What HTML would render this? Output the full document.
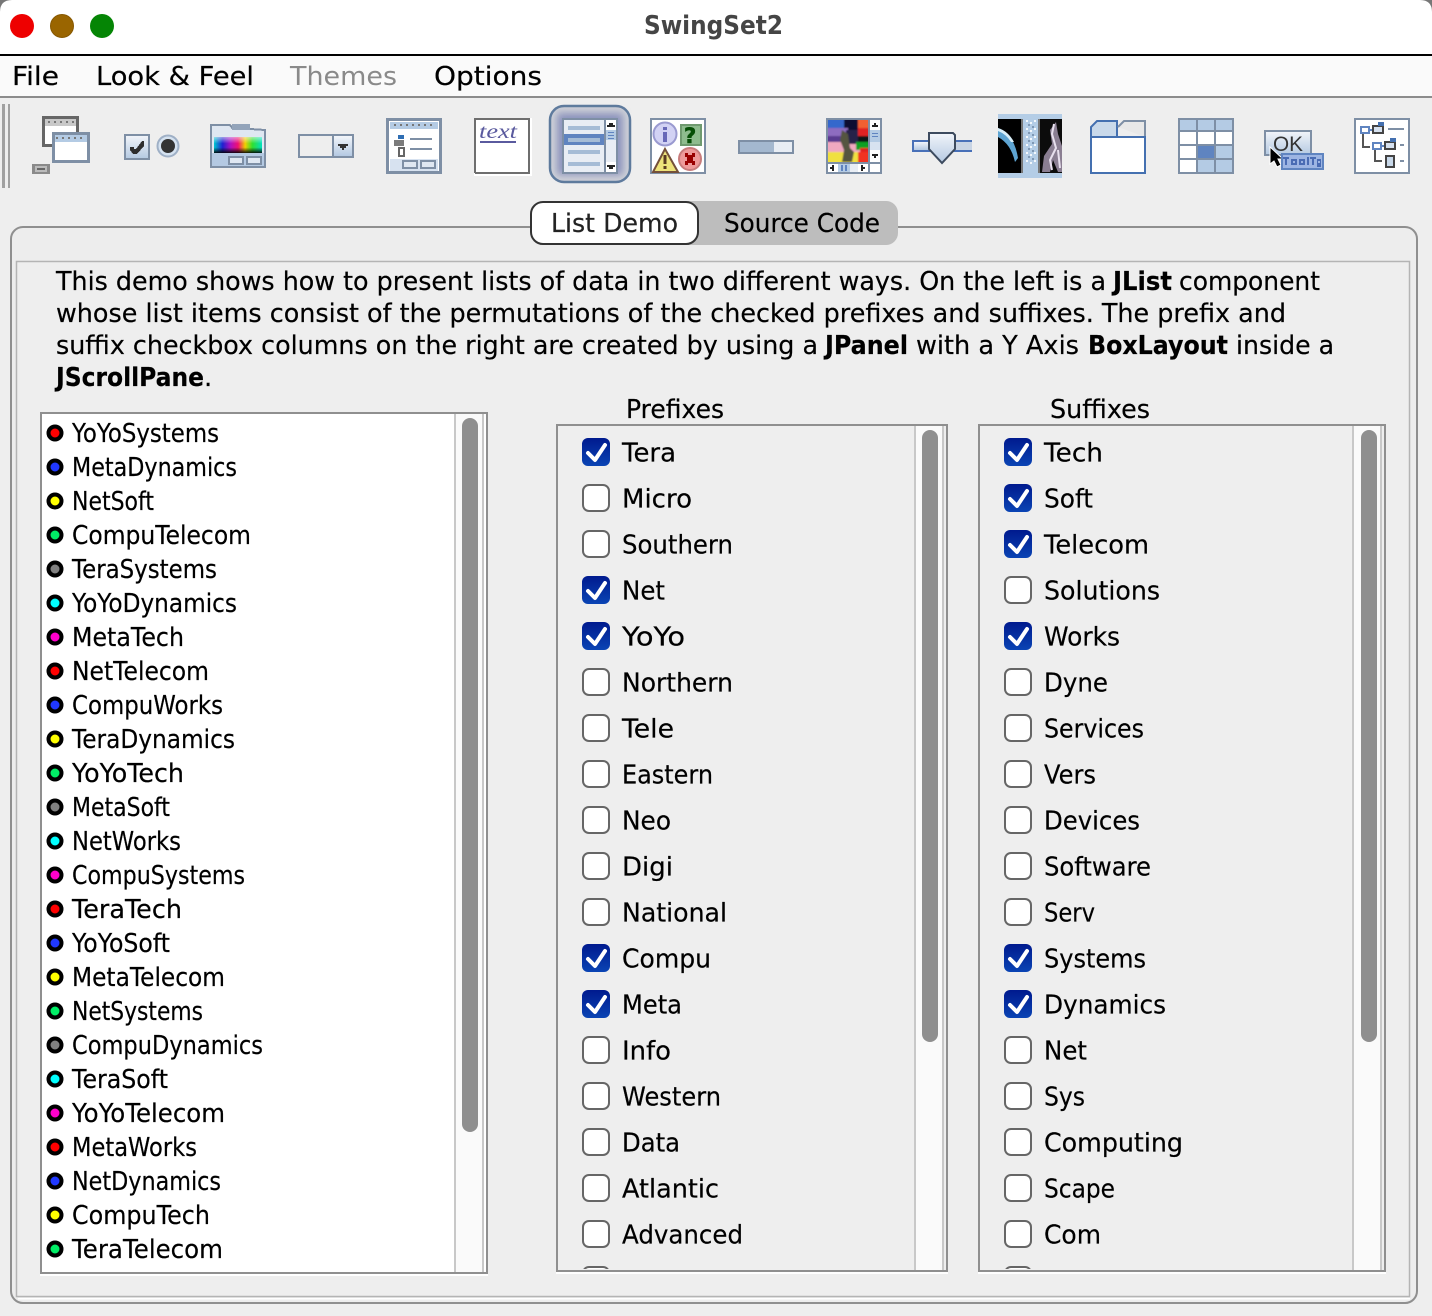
<!DOCTYPE html>
<html lang="en"><head><meta charset="utf-8"><title>SwingSet2</title>
<style>
html,body{margin:0;padding:0;background:#eee;width:1432px;height:1316px;overflow:hidden}
svg{display:block}
text{font-family:"DejaVu Sans","Liberation Sans",sans-serif;font-size:26px;fill:#000;white-space:pre;stroke:#000;stroke-width:.2px}
.b{font-weight:bold}
.p{shape-rendering:crispEdges}
.u{fill:#fff;stroke:#666;stroke-width:2}
.c{fill:url(#cb)}
.k{fill:none;stroke:#fff;stroke-width:4;stroke-linecap:round;stroke-linejoin:round}
.d{stroke:#000;stroke-width:4}
</style></head><body>
<svg xmlns="http://www.w3.org/2000/svg" width="1432" height="1316" viewBox="0 0 1432 1316">
<defs>
<linearGradient id="cb" x1="0" y1="0" x2="0" y2="1"><stop offset="0" stop-color="#001a8e"/><stop offset="1" stop-color="#0a44b4"/></linearGradient>
<linearGradient id="bl" x1="0" y1="0" x2="0" y2="1"><stop offset="0" stop-color="#f2f5fa"/><stop offset="1" stop-color="#b4c9e2"/></linearGradient>
<linearGradient id="rb" x1="0" y1="0" x2="1" y2="0"><stop offset="0" stop-color="#00c8d0"/><stop offset=".18" stop-color="#2020d0"/><stop offset=".35" stop-color="#b010c0"/><stop offset=".5" stop-color="#f01070"/><stop offset=".65" stop-color="#f0d000"/><stop offset=".8" stop-color="#30e030"/><stop offset="1" stop-color="#00e0c0"/></linearGradient>
<linearGradient id="dk" x1="0" y1="0" x2="0" y2="1"><stop offset="0" stop-color="#fff" stop-opacity=".55"/><stop offset=".4" stop-color="#fff" stop-opacity="0"/><stop offset=".65" stop-color="#000" stop-opacity="0"/><stop offset="1" stop-color="#000" stop-opacity=".9"/></linearGradient>
<filter id="bs" x="-20%" y="-20%" width="140%" height="140%"><feGaussianBlur stdDeviation="4"/></filter>
<filter id="b1" x="-5%" y="-5%" width="110%" height="110%"><feGaussianBlur stdDeviation=".9"/></filter>
<clipPath id="sc"><rect x="828" y="120" width="40" height="42"/></clipPath>
<clipPath id="cp"><rect x="558" y="426" width="358" height="843"/></clipPath>
<clipPath id="cs"><rect x="980" y="426" width="372" height="843"/></clipPath>
</defs>

<rect width="1432" height="1316" fill="#eee"/>
<!-- title bar -->
<rect width="1432" height="54" fill="#fff"/>
<path d="M0 0H12Q0 0 0 12Z M1432 0H1420Q1432 0 1432 12Z" fill="#777"/>
<rect y="54" width="1432" height="2" fill="#000" class="p"/>
<circle cx="22" cy="26" r="12" fill="#ee0000"/>
<circle cx="62" cy="26" r="11.500" fill="#9a6500" stroke="#875800"/>
<circle cx="102" cy="26" r="12" fill="#058505"/>
<text x="644" y="34" class="b" style="fill:#454545;stroke:none" textLength="139" lengthAdjust="spacingAndGlyphs">SwingSet2</text>
<!-- menu -->
<rect y="56" width="1432" height="40" fill="#fafafa"/>
<rect y="96" width="1432" height="2" fill="#8c8c8c" class="p"/>
<text x="12" y="85" textLength="47" lengthAdjust="spacingAndGlyphs">File</text>
<text x="96" y="85" textLength="158" lengthAdjust="spacingAndGlyphs">Look &amp; Feel</text>
<text x="290" y="85" style="fill:#8a8a8a;stroke:none" textLength="107" lengthAdjust="spacingAndGlyphs">Themes</text>
<text x="434" y="85" textLength="108" lengthAdjust="spacingAndGlyphs">Options</text>

<!-- toolbar grip -->
<g class="p" fill="#a0a0a0"><rect x="2" y="104" width="3" height="84"/><rect x="8" y="104" width="2" height="84"/></g>

<!-- icon 1 internal frame -->
<g class="p">
<rect x="43.500" y="117.500" width="34" height="28" fill="#fff" stroke="#666" stroke-width="3"/>
<rect x="45" y="119" width="31" height="7" fill="#c8c8c8"/>
<rect x="53.500" y="133.500" width="35" height="28" fill="#fff" stroke="#7e8fa5" stroke-width="3"/>
<rect x="55" y="135" width="32" height="7" fill="#b4cbe4"/>
<path d="M56 137h2v2h-2zM62 137h2v2h-2zM68 137h2v2h-2zM74 137h2v2h-2zM80 137h2v2h-2z M48 121h2v2h-2zM54 121h2v2h-2zM60 121h2v2h-2zM66 121h2v2h-2zM72 121h2v2h-2z" fill="#777"/>
<rect x="32" y="164" width="18" height="10" fill="#8a8a8a"/><rect x="35" y="166" width="12" height="6" fill="#bbb"/><rect x="37" y="168" width="8" height="2" fill="#666"/>
</g>
<!-- icon 2 check/radio -->
<rect x="125" y="135" width="24" height="24" fill="url(#bl)" stroke="#7e8fa5" stroke-width="2" class="p"/>
<path d="M130 147h4v2h2l6-8h2v5l-7 8h-4l-3-4z" fill="#2e2e2e" class="p"/>
<circle cx="168" cy="146" r="10.500" fill="#d5e2f0" stroke="#9fb0c6" stroke-width="2"/>
<circle cx="168" cy="146" r="7" fill="#333"/>
<!-- icon 3 color chooser -->
<g class="p">
<path d="M211 167V125H230L233 129H250L265 130V167Z" fill="#dfe7f1" stroke="#7e8fa5" stroke-width="2"/>
<rect x="212" y="153" width="52" height="13" fill="#b4c9e2"/>
<rect x="232" y="124" width="18" height="6" fill="#93a4ba"/>
<rect x="214" y="137" width="48" height="16" fill="url(#rb)"/><rect x="214" y="137" width="48" height="16" fill="url(#dk)"/>
<rect x="229" y="157" width="14" height="7" fill="#dfe7f1" stroke="#7e8fa5" stroke-width="2"/>
<rect x="247" y="157" width="14" height="7" fill="#dfe7f1" stroke="#7e8fa5" stroke-width="2"/>
</g>
<!-- icon 4 combo -->
<g class="p">
<rect x="299" y="135" width="54" height="22" fill="#eee" stroke="#7e8fa5" stroke-width="2"/>
<rect x="333" y="136" width="19" height="20" fill="url(#bl)"/><rect x="332" y="135" width="2" height="22" fill="#7e8fa5"/>
<path d="M338 144h10v2h-2v2h-2v2h-2v-2h-2v-2h-2z" fill="#333"/>
</g>
<!-- icon 5 form window -->
<g class="p">
<rect x="387.500" y="119.500" width="53" height="53" fill="#fff" stroke="#7e8fa5" stroke-width="3"/>
<rect x="390" y="122" width="48" height="7" fill="#b4cbe4"/>
<path d="M394 124h2v2h-2zM400 124h2v2h-2zM406 124h2v2h-2zM412 124h2v2h-2zM418 124h2v2h-2zM424 124h2v2h-2zM430 124h2v2h-2z" fill="#777"/>
<rect x="394" y="140" width="10" height="6" fill="#7b7b7b"/><rect x="398" y="135" width="6" height="4" fill="#2f6eb3"/>
<rect x="410" y="138" width="22" height="2" fill="#7e8fa5"/><rect x="410" y="148" width="22" height="2" fill="#7e8fa5"/>
<rect x="399" y="148" width="5" height="8" fill="#fff" stroke="#666" stroke-width="2"/>
<rect x="390" y="159" width="48" height="12" fill="#d7e2f0"/>
<rect x="403" y="161" width="14" height="7" fill="#dfe7f1" stroke="#7e8fa5" stroke-width="2"/>
<rect x="421" y="161" width="14" height="7" fill="#dfe7f1" stroke="#7e8fa5" stroke-width="2"/>
</g>
<!-- icon 6 text -->
<g class="p">
<rect x="474" y="118" width="58" height="58" fill="#fff"/>
<path d="M475 173V119H529V173H475" fill="#fff" stroke="#6e6e6e" stroke-width="2"/>
<rect x="480" y="141" width="36" height="2" fill="#5a5a9e"/>
</g>
<text x="479" y="138" style="font-size:20px;font-style:italic;fill:#5a5a9e;stroke:none;font-family:'Liberation Serif',serif" textLength="38" lengthAdjust="spacingAndGlyphs">text</text>
<!-- icon 7 selected list -->
<rect x="550" y="106" width="80" height="76" rx="14" fill="#d0d2d8" stroke="#5d7a9c" stroke-width="2.500"/>
<rect x="557" y="113" width="66" height="62" fill="#8a92bc" filter="url(#bs)"/>
<g class="p">
<rect x="563" y="119" width="54" height="54" fill="#e8edf4" stroke="#7e8fa5" stroke-width="2"/>
<rect x="568" y="126" width="32" height="4" fill="#a5bcd6"/>
<rect x="564" y="134" width="42" height="11" fill="#5f84c0"/><rect x="568" y="138" width="32" height="4" fill="#a5bcd6"/>
<rect x="568" y="150" width="32" height="4" fill="#a5bcd6"/><rect x="568" y="162" width="32" height="4" fill="#a5bcd6"/>
<rect x="605" y="120" width="11" height="52" fill="#e8edf4"/><rect x="604" y="120" width="2" height="52" fill="#7e8fa5"/>
<rect x="606" y="120" width="10" height="10" fill="#fff"/><path d="M609 123h4v2h-4z M607 125h8v2h-8z" fill="#222"/>
<rect x="606" y="130" width="10" height="10" fill="#b4cbe4"/><rect x="608" y="132" width="6" height="1" fill="#5f84c0"/><rect x="608" y="135" width="6" height="1" fill="#5f84c0"/><rect x="608" y="138" width="6" height="1" fill="#5f84c0"/>
<rect x="606" y="162" width="10" height="10" fill="#fff"/><path d="M607 165h8v2h-8z M609 167h4v2h-4z" fill="#222"/>
</g>
<!-- icon 8 option pane -->
<g class="p"><rect x="651" y="119" width="54" height="54" fill="#fff" stroke="#7e8fa5" stroke-width="2"/>
<rect x="681" y="125" width="20" height="20" fill="#8ebc8e" stroke="#6f9a6f" stroke-width="2"/></g>
<circle cx="665" cy="134" r="11.500" fill="#d2d2f4" stroke="#9a9ad0" stroke-width="2"/>
<rect x="663" y="127" width="4" height="3" fill="#6868b8" class="p"/><rect x="663" y="132" width="4" height="10" fill="#6868b8" class="p"/>
<text x="684" y="143" style="font-size:21px;font-weight:bold;fill:#064e06;stroke:#064e06;stroke-width:.6px">?</text>
<path d="M665 149l13 23h-25z" fill="#ede27a" stroke="#74503a" stroke-width="2"/>
<rect x="663.500" y="155" width="3" height="9" fill="#5a3a20" class="p"/><rect x="663.500" y="166" width="3" height="3" fill="#5a3a20" class="p"/>
<circle cx="690" cy="159" r="11" fill="#ee9a9a" stroke="#c87c7c" stroke-width="2"/>
<path d="M685 153h3v2h4v-2h3v4h-2v4h2v4h-3v-2h-4v2h-3v-4h2v-4h-2z" fill="#990000" class="p"/>
<!-- icon 9 progress -->
<g class="p"><rect x="739" y="141" width="54" height="12" fill="#e8edf4" stroke="#7e8fa5" stroke-width="2"/><rect x="740" y="142" width="34" height="10" fill="#a4b8cf"/></g>
<!-- icon 10 scroll pane -->
<g class="p">
<rect x="827" y="119" width="54" height="54" fill="#fff" stroke="#7e8fa5" stroke-width="2"/>
</g>
<g clip-path="url(#sc)"><g filter="url(#b1)">
<rect x="824" y="116" width="48" height="48" fill="#f0a8c0"/>
<rect x="824" y="116" width="30" height="14" fill="#3468cc"/><rect x="844" y="116" width="16" height="18" fill="#101030"/><rect x="858" y="116" width="14" height="12" fill="#f06030"/>
<rect x="824" y="128" width="24" height="14" fill="#8e6cc0"/><rect x="826" y="136" width="18" height="6" fill="#5a3a90"/><rect x="846" y="130" width="14" height="14" fill="#262048"/><rect x="858" y="128" width="14" height="8" fill="#e02020"/><rect x="858" y="136" width="14" height="8" fill="#101818"/>
<rect x="856" y="142" width="14" height="8" fill="#10a020"/><rect x="860" y="148" width="10" height="6" fill="#e02020"/>
<rect x="824" y="152" width="48" height="12" fill="#f0e040"/><rect x="858" y="152" width="12" height="12" fill="#f03020"/>
<path d="M842 130l6 4 2 14 4 4-2 10h-10l2-12-4-10z" fill="#555540"/>
</g></g>
<g class="p">
<rect x="868" y="120" width="2" height="52" fill="#7e8fa5"/><rect x="828" y="162" width="52" height="2" fill="#7e8fa5"/>
<rect x="870" y="120" width="10" height="10" fill="#fff"/><path d="M874 123h2v2h-2z M872 125h6v2h-6z" fill="#222"/>
<rect x="870" y="130" width="10" height="12" fill="#b4cbe4"/><rect x="872" y="133" width="6" height="1" fill="#5f84c0"/><rect x="872" y="136" width="6" height="1" fill="#5f84c0"/>
<rect x="870" y="142" width="10" height="8" fill="#d7e2f0"/>
<rect x="870" y="152" width="10" height="8" fill="#fff"/><path d="M872 154h6v2h-6z M874 156h2v2h-2z" fill="#222"/>
<rect x="828" y="164" width="8" height="8" fill="#fff"/><path d="M830 167h2v2h-2z M832 165h2v6h-2z" fill="#222"/>
<rect x="838" y="164" width="12" height="8" fill="#b4cbe4"/><rect x="841" y="165" width="2" height="6" fill="#5f84c0"/><rect x="845" y="165" width="2" height="6" fill="#5f84c0"/>
<rect x="850" y="164" width="8" height="8" fill="#e8edf4"/><rect x="859" y="164" width="8" height="8" fill="#fff"/><path d="M861 165h2v6h-2z M863 167h2v2h-2z" fill="#222"/>
</g>
<!-- icon 11 slider -->
<g class="p">
<rect x="912" y="140" width="60" height="2" fill="#4870b8"/><rect x="912" y="150" width="60" height="2" fill="#4870b8"/>
<rect x="914" y="142" width="58" height="8" fill="#c8d4e4"/><rect x="914" y="142" width="16" height="8" fill="url(#bl)"/><rect x="912" y="140" width="2" height="12" fill="#4870b8"/>
</g>
<path d="M929 133h24l2 2v14l-13 14-13-14v-14z" fill="url(#bl)" stroke="#3c4a5e" stroke-width="2"/>
<!-- icon 12 split pane -->
<g class="p">
<rect x="998" y="114" width="64" height="64" fill="#b4cde6"/>
<rect x="998" y="119" width="23" height="54" fill="#000"/><rect x="1021" y="119" width="2" height="54" fill="#777"/>
<rect x="1038" y="119" width="24" height="54" fill="#0c0c0c"/><rect x="1038" y="119" width="2" height="54" fill="#777"/>
<path d="M1026 120h2v2h-2zM1030 122h2v2h-2zM1034 120h2v2h-2zM1026 128h2v2h-2zM1030 130h2v2h-2zM1034 128h2v2h-2zM1026 136h2v2h-2zM1030 138h2v2h-2zM1034 136h2v2h-2zM1026 144h2v2h-2zM1030 146h2v2h-2zM1034 144h2v2h-2zM1026 152h2v2h-2zM1030 154h2v2h-2zM1034 152h2v2h-2zM1026 160h2v2h-2zM1030 162h2v2h-2zM1034 160h2v2h-2z" fill="#f4f8fc"/>
<path d="M1028 124h2v2h-2zM1032 126h2v2h-2zM1028 132h2v2h-2zM1032 134h2v2h-2zM1028 140h2v2h-2zM1032 142h2v2h-2zM1028 148h2v2h-2zM1032 150h2v2h-2zM1028 156h2v2h-2zM1032 158h2v2h-2z" fill="#7f98b4"/>
</g>
<path d="M998 128Q1014 134 1018 158L1015 162Q1011 144 998 137Z" fill="#5ea4d2"/>
<path d="M998 128Q1008 131 1014 142L1011 142Q1006 134 998 131Z" fill="#d8eef8"/>
<path d="M1056 122L1050 130 1052 144 1044 156 1042 172H1050L1053 160 1058 172H1062V146L1058 134Z" fill="#8a7e92"/>
<path d="M1054 124L1052 134 1056 148 1050 160 1052 170M1058 150L1060 168" fill="none" stroke="#e8e0ee" stroke-width="2"/>
<!-- icon 13 tabbed -->
<path d="M1091 137V127L1097 121H1117V137Z" fill="#c9d9ea" stroke="#4470b0" stroke-width="2"/>
<path d="M1118 127L1124 121H1145V137" fill="#e8e8e8" stroke="#7e8fa5" stroke-width="2"/>
<rect x="1091" y="137" width="54" height="36" fill="#fff" stroke="#4470b0" stroke-width="2" class="p"/>
<!-- icon 14 table -->
<g class="p">
<rect x="1179" y="119" width="54" height="54" fill="#fff" stroke="#7e8fa5" stroke-width="2"/>
<rect x="1180" y="120" width="52" height="10" fill="#b4cbe4"/>
<rect x="1198" y="146" width="17" height="13" fill="#5f84c0"/><rect x="1215" y="146" width="17" height="13" fill="#b4cbe4"/>
<rect x="1198" y="159" width="34" height="13" fill="#b4cbe4"/>
<rect x="1196" y="120" width="2" height="52" fill="#7e8fa5"/><rect x="1214" y="120" width="2" height="52" fill="#7e8fa5"/>
<rect x="1180" y="130" width="52" height="2" fill="#7e8fa5"/><rect x="1180" y="144" width="52" height="2" fill="#7e8fa5"/><rect x="1180" y="158" width="52" height="2" fill="#7e8fa5"/>
</g>
<!-- icon 15 tooltip -->
<rect x="1265" y="131" width="46" height="24" fill="url(#bl)" stroke="#7e8fa5" stroke-width="2" class="p"/>
<text x="1273" y="151" style="font-size:21px;fill:#333;stroke:none;font-family:'Liberation Sans',sans-serif" textLength="30" lengthAdjust="spacingAndGlyphs">OK</text>
<path d="M1270 147v17l4-3 3 6 4-2-3-6h5z" fill="#000" stroke="#fff" stroke-width="1"/>
<g class="p"><rect x="1281" y="153" width="43" height="17" fill="#9db5e3"/>
<rect x="1281" y="153" width="43" height="2" fill="#5f84c0"/><rect x="1281" y="168" width="43" height="2" fill="#5f84c0"/><rect x="1281" y="153" width="2" height="17" fill="#5f84c0"/><rect x="1322" y="153" width="2" height="17" fill="#5f84c0"/>
<path d="M1285 157h2v8h-2zM1283 157h6v2h-6zM1291 159h6v6h-6zM1299 159h6v6h-6zM1307 157h2v8h-2zM1312 157h2v8h-2zM1310 157h6v2h-6zM1317 159h4v8h-4z" fill="#4a6cb4"/>
<rect x="1293" y="161" width="2" height="2" fill="#9db5e3"/><rect x="1301" y="161" width="2" height="2" fill="#9db5e3"/><rect x="1318" y="161" width="2" height="2" fill="#9db5e3"/></g>
<!-- icon 16 tree -->
<g class="p">
<rect x="1355" y="119" width="54" height="54" fill="#fff" stroke="#7e8fa5" stroke-width="2"/>
<rect x="1361" y="127" width="8" height="6" fill="#fff" stroke="#5f84c0" stroke-width="2"/><rect x="1368" y="129" width="4" height="2" fill="#5f84c0"/>
<rect x="1373" y="126" width="10" height="7" fill="#d7e2f0" stroke="#444" stroke-width="2"/><rect x="1378" y="122" width="6" height="4" fill="#4470b0"/>
<rect x="1388" y="128" width="16" height="2" fill="#7e8fa5"/>
<rect x="1362" y="134" width="2" height="14" fill="#555"/><rect x="1362" y="146" width="8" height="2" fill="#555"/>
<rect x="1373" y="143" width="8" height="6" fill="#fff" stroke="#5f84c0" stroke-width="2"/><rect x="1380" y="145" width="4" height="2" fill="#5f84c0"/>
<rect x="1385" y="142" width="10" height="7" fill="#d7e2f0" stroke="#444" stroke-width="2"/><rect x="1390" y="138" width="6" height="4" fill="#4470b0"/>
<rect x="1400" y="144" width="4" height="2" fill="#7e8fa5"/>
<rect x="1374" y="150" width="2" height="12" fill="#555"/><rect x="1374" y="160" width="8" height="2" fill="#555"/>
<rect x="1386" y="156" width="8" height="11" fill="#c9d9ea" stroke="#444" stroke-width="2"/>
<rect x="1400" y="160" width="4" height="2" fill="#7e8fa5"/>
</g>

<!-- tabbed panel -->
<rect x="11" y="227" width="1406" height="1076" rx="12" fill="#ededed" stroke="#8f8f8f" stroke-width="2"/>
<rect x="16.500" y="261.500" width="1393" height="1035" fill="#eee" stroke="#b4b4b4" stroke-width="1.500"/>
<rect x="18" y="1298" width="1392" height="1.500" fill="#fff"/>
<!-- tabs -->
<rect x="660" y="201" width="238" height="44" rx="12" fill="#bdbdbd"/>
<rect x="531" y="202" width="167" height="42" rx="12" fill="#fff" stroke="#333" stroke-width="2"/>
<text x="551" y="232" style="fill:#222;stroke:#222" textLength="127" lengthAdjust="spacingAndGlyphs">List Demo</text>
<text x="724" y="232" textLength="156" lengthAdjust="spacingAndGlyphs">Source Code</text>

<!-- description -->
<text x="56" y="290" textLength="1050" lengthAdjust="spacingAndGlyphs">This demo shows how to present lists of data in two different ways. On the left is a</text>
<text x="1113" y="290" class="b" textLength="59" lengthAdjust="spacingAndGlyphs">JList</text>
<text x="1179" y="290" textLength="141" lengthAdjust="spacingAndGlyphs">component</text>
<text x="56" y="322" textLength="1230" lengthAdjust="spacingAndGlyphs">whose list items consist of the permutations of the checked prefixes and suffixes. The prefix and</text>
<text x="56" y="354" textLength="762" lengthAdjust="spacingAndGlyphs">suffix checkbox columns on the right are created by using a</text>
<text x="825" y="354" class="b" textLength="83" lengthAdjust="spacingAndGlyphs">JPanel</text>
<text x="916" y="354" textLength="163" lengthAdjust="spacingAndGlyphs">with a Y Axis</text>
<text x="1088" y="354" class="b" textLength="140" lengthAdjust="spacingAndGlyphs">BoxLayout</text>
<text x="1236" y="354" textLength="98" lengthAdjust="spacingAndGlyphs">inside a</text>
<text x="56" y="386" class="b" textLength="148" lengthAdjust="spacingAndGlyphs">JScrollPane</text>
<text x="204" y="386">.</text>

<!-- left list -->
<g class="p">
<rect x="40" y="412" width="448" height="862" fill="#fff"/>
<rect x="456" y="414" width="26" height="858" fill="#fafafa"/>
<rect x="454" y="414" width="2" height="858" fill="#c8c8c8"/>
<rect x="482" y="414" width="2" height="858" fill="#c8c8c8"/>
<path d="M41 413H487V1273H41Z" fill="none" stroke="#8f8f8f" stroke-width="2"/>
<rect x="40" y="1274" width="448" height="2" fill="#fff"/>
</g>
<rect x="462" y="418" width="16" height="714" rx="8" fill="#8f8f8f"/>

<g class="d">
<circle cx="55" cy="433" r="6.500" fill="#f00"/><circle cx="55" cy="467" r="6.500" fill="#2038ff"/><circle cx="55" cy="501" r="6.500" fill="#ff0"/><circle cx="55" cy="535" r="6.500" fill="#0e6"/><circle cx="55" cy="569" r="6.500" fill="#808080"/><circle cx="55" cy="603" r="6.500" fill="#0ff"/><circle cx="55" cy="637" r="6.500" fill="#f0c"/>
<circle cx="55" cy="671" r="6.500" fill="#f00"/><circle cx="55" cy="705" r="6.500" fill="#2038ff"/><circle cx="55" cy="739" r="6.500" fill="#ff0"/><circle cx="55" cy="773" r="6.500" fill="#0e6"/><circle cx="55" cy="807" r="6.500" fill="#808080"/><circle cx="55" cy="841" r="6.500" fill="#0ff"/><circle cx="55" cy="875" r="6.500" fill="#f0c"/>
<circle cx="55" cy="909" r="6.500" fill="#f00"/><circle cx="55" cy="943" r="6.500" fill="#2038ff"/><circle cx="55" cy="977" r="6.500" fill="#ff0"/><circle cx="55" cy="1011" r="6.500" fill="#0e6"/><circle cx="55" cy="1045" r="6.500" fill="#808080"/><circle cx="55" cy="1079" r="6.500" fill="#0ff"/><circle cx="55" cy="1113" r="6.500" fill="#f0c"/>
<circle cx="55" cy="1147" r="6.500" fill="#f00"/><circle cx="55" cy="1181" r="6.500" fill="#2038ff"/><circle cx="55" cy="1215" r="6.500" fill="#ff0"/><circle cx="55" cy="1249" r="6.500" fill="#0e6"/>
</g>
<text x="72" y="442" textLength="147" lengthAdjust="spacingAndGlyphs">YoYoSystems</text>
<text x="72" y="476" textLength="165" lengthAdjust="spacingAndGlyphs">MetaDynamics</text>
<text x="72" y="510" textLength="82" lengthAdjust="spacingAndGlyphs">NetSoft</text>
<text x="72" y="544" textLength="179" lengthAdjust="spacingAndGlyphs">CompuTelecom</text>
<text x="72" y="578" textLength="145" lengthAdjust="spacingAndGlyphs">TeraSystems</text>
<text x="72" y="612" textLength="165" lengthAdjust="spacingAndGlyphs">YoYoDynamics</text>
<text x="72" y="646" textLength="112" lengthAdjust="spacingAndGlyphs">MetaTech</text>
<text x="72" y="680" textLength="137" lengthAdjust="spacingAndGlyphs">NetTelecom</text>
<text x="72" y="714" textLength="151" lengthAdjust="spacingAndGlyphs">CompuWorks</text>
<text x="72" y="748" textLength="163" lengthAdjust="spacingAndGlyphs">TeraDynamics</text>
<text x="72" y="782" textLength="112" lengthAdjust="spacingAndGlyphs">YoYoTech</text>
<text x="72" y="816" textLength="98" lengthAdjust="spacingAndGlyphs">MetaSoft</text>
<text x="72" y="850" textLength="109" lengthAdjust="spacingAndGlyphs">NetWorks</text>
<text x="72" y="884" textLength="173" lengthAdjust="spacingAndGlyphs">CompuSystems</text>
<text x="72" y="918" textLength="110" lengthAdjust="spacingAndGlyphs">TeraTech</text>
<text x="72" y="952" textLength="98" lengthAdjust="spacingAndGlyphs">YoYoSoft</text>
<text x="72" y="986" textLength="153" lengthAdjust="spacingAndGlyphs">MetaTelecom</text>
<text x="72" y="1020" textLength="131" lengthAdjust="spacingAndGlyphs">NetSystems</text>
<text x="72" y="1054" textLength="191" lengthAdjust="spacingAndGlyphs">CompuDynamics</text>
<text x="72" y="1088" textLength="96" lengthAdjust="spacingAndGlyphs">TeraSoft</text>
<text x="72" y="1122" textLength="153" lengthAdjust="spacingAndGlyphs">YoYoTelecom</text>
<text x="72" y="1156" textLength="125" lengthAdjust="spacingAndGlyphs">MetaWorks</text>
<text x="72" y="1190" textLength="149" lengthAdjust="spacingAndGlyphs">NetDynamics</text>
<text x="72" y="1224" textLength="138" lengthAdjust="spacingAndGlyphs">CompuTech</text>
<text x="72" y="1258" textLength="151" lengthAdjust="spacingAndGlyphs">TeraTelecom</text>

<!-- labels -->
<text x="626" y="418" textLength="98" lengthAdjust="spacingAndGlyphs">Prefixes</text>
<text x="1050" y="418" textLength="100" lengthAdjust="spacingAndGlyphs">Suffixes</text>

<!-- prefix box -->
<g class="p">
<rect x="556" y="424" width="392" height="849" fill="#eee"/>
<rect x="916" y="426" width="26" height="844" fill="#fafafa"/>
<rect x="914" y="426" width="2" height="844" fill="#c8c8c8"/><rect x="942" y="426" width="2" height="844" fill="#c8c8c8"/>
<path d="M557 425H947V1271H557Z" fill="none" stroke="#8f8f8f" stroke-width="2"/>
<rect x="556" y="1272" width="392" height="2" fill="#fff"/>
</g>
<rect x="922" y="430" width="16" height="612" rx="8" fill="#8f8f8f"/>
<!-- suffix box -->
<g class="p">
<rect x="978" y="424" width="408" height="849" fill="#eee"/>
<rect x="1354" y="426" width="26" height="844" fill="#fafafa"/>
<rect x="1352" y="426" width="2" height="844" fill="#c8c8c8"/><rect x="1380" y="426" width="2" height="844" fill="#c8c8c8"/>
<path d="M979 425H1385V1271H979Z" fill="none" stroke="#8f8f8f" stroke-width="2"/>
<rect x="978" y="1272" width="408" height="2" fill="#fff"/>
</g>
<rect x="1361" y="430" width="16" height="612" rx="8" fill="#8f8f8f"/>

<!-- prefix checkboxes -->
<rect class="c" x="582" y="438" width="28" height="28" rx="6"/><path class="k" d="M588 453l7 7 10-15"/>
<rect class="u" x="583" y="485" width="26" height="26" rx="6"/>
<rect class="u" x="583" y="531" width="26" height="26" rx="6"/>
<rect class="c" x="582" y="576" width="28" height="28" rx="6"/><path class="k" d="M588 591l7 7 10-15"/>
<rect class="c" x="582" y="622" width="28" height="28" rx="6"/><path class="k" d="M588 637l7 7 10-15"/>
<rect class="u" x="583" y="669" width="26" height="26" rx="6"/>
<rect class="u" x="583" y="715" width="26" height="26" rx="6"/>
<rect class="u" x="583" y="761" width="26" height="26" rx="6"/>
<rect class="u" x="583" y="807" width="26" height="26" rx="6"/>
<rect class="u" x="583" y="853" width="26" height="26" rx="6"/>
<rect class="u" x="583" y="899" width="26" height="26" rx="6"/>
<rect class="c" x="582" y="944" width="28" height="28" rx="6"/><path class="k" d="M588 959l7 7 10-15"/>
<rect class="c" x="582" y="990" width="28" height="28" rx="6"/><path class="k" d="M588 1005l7 7 10-15"/>
<rect class="u" x="583" y="1037" width="26" height="26" rx="6"/>
<rect class="u" x="583" y="1083" width="26" height="26" rx="6"/>
<rect class="u" x="583" y="1129" width="26" height="26" rx="6"/>
<rect class="u" x="583" y="1175" width="26" height="26" rx="6"/>
<rect class="u" x="583" y="1221" width="26" height="26" rx="6"/>
<g clip-path="url(#cp)"><rect class="u" x="583" y="1267" width="26" height="26" rx="6"/></g>

<text x="622" y="461.500" textLength="54" lengthAdjust="spacingAndGlyphs">Tera</text>
<text x="622" y="507.500" textLength="70" lengthAdjust="spacingAndGlyphs">Micro</text>
<text x="622" y="553.500" textLength="111" lengthAdjust="spacingAndGlyphs">Southern</text>
<text x="622" y="599.500" textLength="43" lengthAdjust="spacingAndGlyphs">Net</text>
<text x="622" y="645.500" textLength="63" lengthAdjust="spacingAndGlyphs">YoYo</text>
<text x="622" y="691.500" textLength="111" lengthAdjust="spacingAndGlyphs">Northern</text>
<text x="622" y="737.500" textLength="52" lengthAdjust="spacingAndGlyphs">Tele</text>
<text x="622" y="783.500" textLength="91" lengthAdjust="spacingAndGlyphs">Eastern</text>
<text x="622" y="829.500" textLength="49" lengthAdjust="spacingAndGlyphs">Neo</text>
<text x="622" y="875.500" textLength="51" lengthAdjust="spacingAndGlyphs">Digi</text>
<text x="622" y="921.500" textLength="105" lengthAdjust="spacingAndGlyphs">National</text>
<text x="622" y="967.500" textLength="89" lengthAdjust="spacingAndGlyphs">Compu</text>
<text x="622" y="1013.500" textLength="60" lengthAdjust="spacingAndGlyphs">Meta</text>
<text x="622" y="1059.500" textLength="49" lengthAdjust="spacingAndGlyphs">Info</text>
<text x="622" y="1105.500" textLength="99" lengthAdjust="spacingAndGlyphs">Western</text>
<text x="622" y="1151.500" textLength="58" lengthAdjust="spacingAndGlyphs">Data</text>
<text x="622" y="1197.500" textLength="97" lengthAdjust="spacingAndGlyphs">Atlantic</text>
<text x="622" y="1243.500" textLength="121" lengthAdjust="spacingAndGlyphs">Advanced</text>

<!-- suffix checkboxes -->
<rect class="c" x="1004" y="438" width="28" height="28" rx="6"/><path class="k" d="M1010 453l7 7 10-15"/>
<rect class="c" x="1004" y="484" width="28" height="28" rx="6"/><path class="k" d="M1010 499l7 7 10-15"/>
<rect class="c" x="1004" y="530" width="28" height="28" rx="6"/><path class="k" d="M1010 545l7 7 10-15"/>
<rect class="u" x="1005" y="577" width="26" height="26" rx="6"/>
<rect class="c" x="1004" y="622" width="28" height="28" rx="6"/><path class="k" d="M1010 637l7 7 10-15"/>
<rect class="u" x="1005" y="669" width="26" height="26" rx="6"/>
<rect class="u" x="1005" y="715" width="26" height="26" rx="6"/>
<rect class="u" x="1005" y="761" width="26" height="26" rx="6"/>
<rect class="u" x="1005" y="807" width="26" height="26" rx="6"/>
<rect class="u" x="1005" y="853" width="26" height="26" rx="6"/>
<rect class="u" x="1005" y="899" width="26" height="26" rx="6"/>
<rect class="c" x="1004" y="944" width="28" height="28" rx="6"/><path class="k" d="M1010 959l7 7 10-15"/>
<rect class="c" x="1004" y="990" width="28" height="28" rx="6"/><path class="k" d="M1010 1005l7 7 10-15"/>
<rect class="u" x="1005" y="1037" width="26" height="26" rx="6"/>
<rect class="u" x="1005" y="1083" width="26" height="26" rx="6"/>
<rect class="u" x="1005" y="1129" width="26" height="26" rx="6"/>
<rect class="u" x="1005" y="1175" width="26" height="26" rx="6"/>
<rect class="u" x="1005" y="1221" width="26" height="26" rx="6"/>
<g clip-path="url(#cs)"><rect class="u" x="1005" y="1267" width="26" height="26" rx="6"/></g>

<text x="1044" y="461.500" textLength="59" lengthAdjust="spacingAndGlyphs">Tech</text>
<text x="1044" y="507.500" textLength="49" lengthAdjust="spacingAndGlyphs">Soft</text>
<text x="1044" y="553.500" textLength="105" lengthAdjust="spacingAndGlyphs">Telecom</text>
<text x="1044" y="599.500" textLength="116" lengthAdjust="spacingAndGlyphs">Solutions</text>
<text x="1044" y="645.500" textLength="76" lengthAdjust="spacingAndGlyphs">Works</text>
<text x="1044" y="691.500" textLength="64" lengthAdjust="spacingAndGlyphs">Dyne</text>
<text x="1044" y="737.500" textLength="100" lengthAdjust="spacingAndGlyphs">Services</text>
<text x="1044" y="783.500" textLength="52" lengthAdjust="spacingAndGlyphs">Vers</text>
<text x="1044" y="829.500" textLength="96" lengthAdjust="spacingAndGlyphs">Devices</text>
<text x="1044" y="875.500" textLength="107" lengthAdjust="spacingAndGlyphs">Software</text>
<text x="1044" y="921.500" textLength="51" lengthAdjust="spacingAndGlyphs">Serv</text>
<text x="1044" y="967.500" textLength="102" lengthAdjust="spacingAndGlyphs">Systems</text>
<text x="1044" y="1013.500" textLength="122" lengthAdjust="spacingAndGlyphs">Dynamics</text>
<text x="1044" y="1059.500" textLength="43" lengthAdjust="spacingAndGlyphs">Net</text>
<text x="1044" y="1105.500" textLength="41" lengthAdjust="spacingAndGlyphs">Sys</text>
<text x="1044" y="1151.500" textLength="139" lengthAdjust="spacingAndGlyphs">Computing</text>
<text x="1044" y="1197.500" textLength="71" lengthAdjust="spacingAndGlyphs">Scape</text>
<text x="1044" y="1243.500" textLength="57" lengthAdjust="spacingAndGlyphs">Com</text>
</svg>
</body></html>
